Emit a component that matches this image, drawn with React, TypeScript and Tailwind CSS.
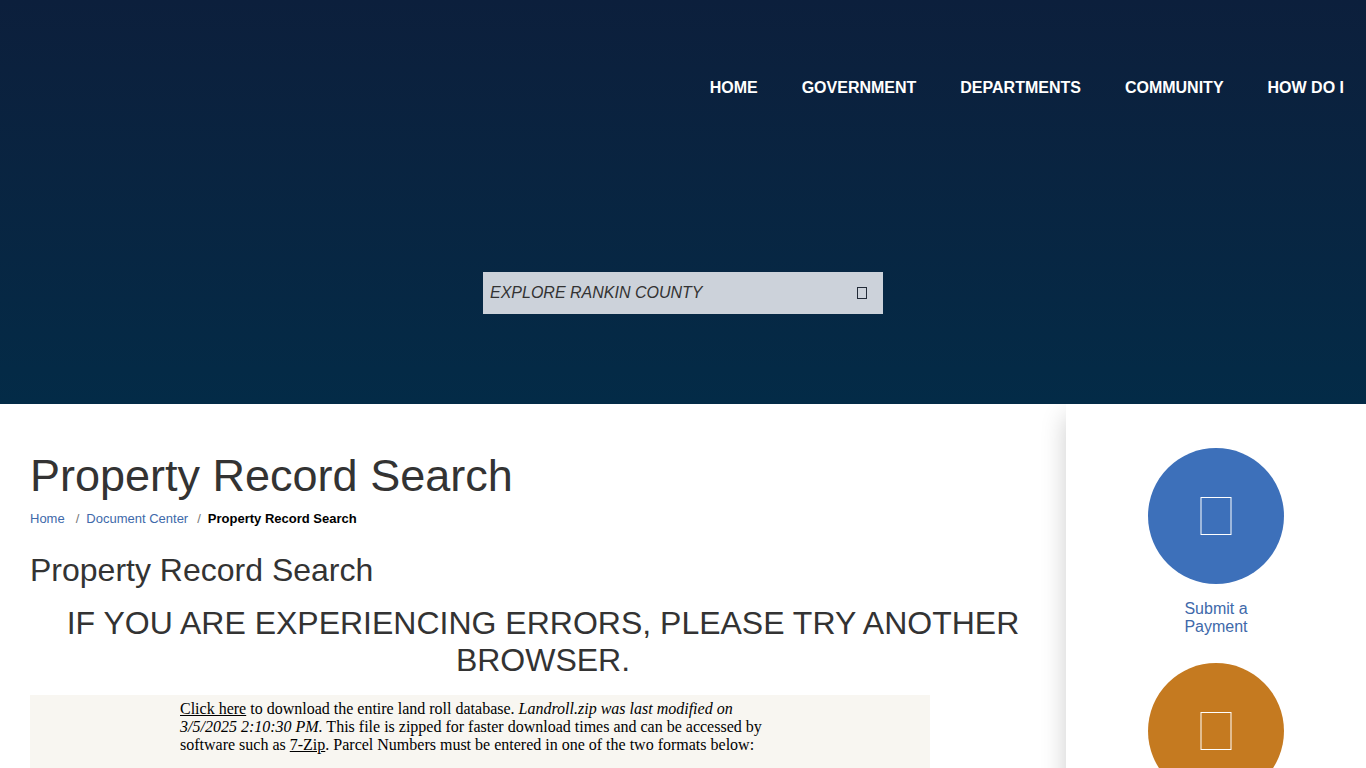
import React from 'react';

interface QuickLink {
  label: string;
  colorClass: string;
}

const navItems = ['Home', 'Government', 'Departments', 'Community', 'How Do I'];

const quickLinks: QuickLink[] = [
  { label: 'Submit a Payment', colorClass: 'bg-[#3d70ba]' },
  { label: '', colorClass: 'bg-[#c57a20]' },
];

const Header: React.FC = () => (
  <header className="relative z-10 h-[404px] bg-linear-to-b from-[#0c1f3c] to-[#032b47]">
    <nav aria-label="Main" className="flex justify-end pt-[76px]">
      {navItems.map(item => (
        <a key={item} href="#" className="px-[22px] text-base font-bold uppercase text-white">
          {item}
        </a>
      ))}
    </nav>
    <form className="mx-auto mt-[172px] flex h-[42px] w-[400px] bg-[#ccd2da]">
      <input
        type="text"
        aria-label="Explore Rankin County"
        placeholder="EXPLORE RANKIN COUNTY"
        className="min-w-0 flex-1 px-[7px] text-base italic text-[#333] outline-none placeholder:text-[#333]"
      />
      <button type="button" aria-label="Search" className="flex w-[42px] items-center justify-center">
        <svg width="10" height="12" viewBox="0 0 10 12" fill="none" stroke="#222b38">
          <rect x="0.5" y="0.5" width="9" height="11" />
        </svg>
      </button>
    </form>
  </header>
);

const Breadcrumbs: React.FC = () => (
  <nav aria-label="Breadcrumb" className="mt-2 flex text-[13px] leading-5">
    <a href="#" className="text-[#4069aa]">Home</a>
    <span className="pl-[11px] pr-[7px] text-[#777]">/</span>
    <a href="#" className="text-[#4069aa]">Document Center</a>
    <span className="pl-[9px] pr-[7px] text-[#777]">/</span>
    <span className="font-bold text-black">Property Record Search</span>
  </nav>
);

const Sidebar: React.FC = () => (
  <aside className="flex w-[300px] shrink-0 flex-col items-center gap-[27px] bg-white pt-11 shadow-[0_12px_24px_rgba(0,0,0,0.2)]">
    {quickLinks.map((link, i) => (
      <a key={i} href="#" className="flex w-[136px] flex-col items-center text-[#4069aa]">
        <span className={`flex size-[136px] items-center justify-center rounded-full ${link.colorClass}`}>
          <svg width="32" height="38" viewBox="0 0 32 38" fill="none" stroke="#fff">
            <rect x="1" y="0.5" width="30" height="37" />
          </svg>
        </span>
        <span className="mt-4 w-20 text-center text-base leading-[18px]">{link.label}</span>
      </a>
    ))}
  </aside>
);

const App: React.FC = () => {
  return (
    <div className="flex h-screen flex-col overflow-hidden bg-white font-['Liberation_Sans',Arial,sans-serif]">
      <div className="shrink-0">
        <Header />
      </div>
      <div className="flex flex-1">
        <main className="min-w-0 flex-1 pl-[30px] pr-[10px] pt-[47px] text-[#333]">
          <h1 className="text-[45px] leading-[50px]">Property Record Search</h1>
          <Breadcrumbs />
          <h2 className="mt-[21px] text-[32px] leading-10">Property Record Search</h2>
          <h3 className="mt-[15px] text-center text-[32px] leading-[37px]">
            IF YOU ARE EXPERIENCING ERRORS, PLEASE TRY ANOTHER BROWSER.
          </h3>
          {/* Land roll download notes */}
          <div className="mt-4 min-h-[200px] max-w-[900px] bg-[#f8f6f1] px-[150px] pt-[5px] font-['Liberation_Serif','Times_New_Roman',serif] text-base leading-[18px] text-black">
            <p>
              <a href="#" className="underline">Click here</a> to download the entire land roll database.{' '}
              <em>Landroll.zip was last modified on 3/5/2025 2:10:30 PM.</em> This file is zipped for faster
              download times and can be accessed by software such as <a href="#" className="underline">7-Zip</a>.
              Parcel Numbers must be entered in one of the two formats below:
            </p>
          </div>
        </main>
        <Sidebar />
      </div>
    </div>
  );
};

export default App;
